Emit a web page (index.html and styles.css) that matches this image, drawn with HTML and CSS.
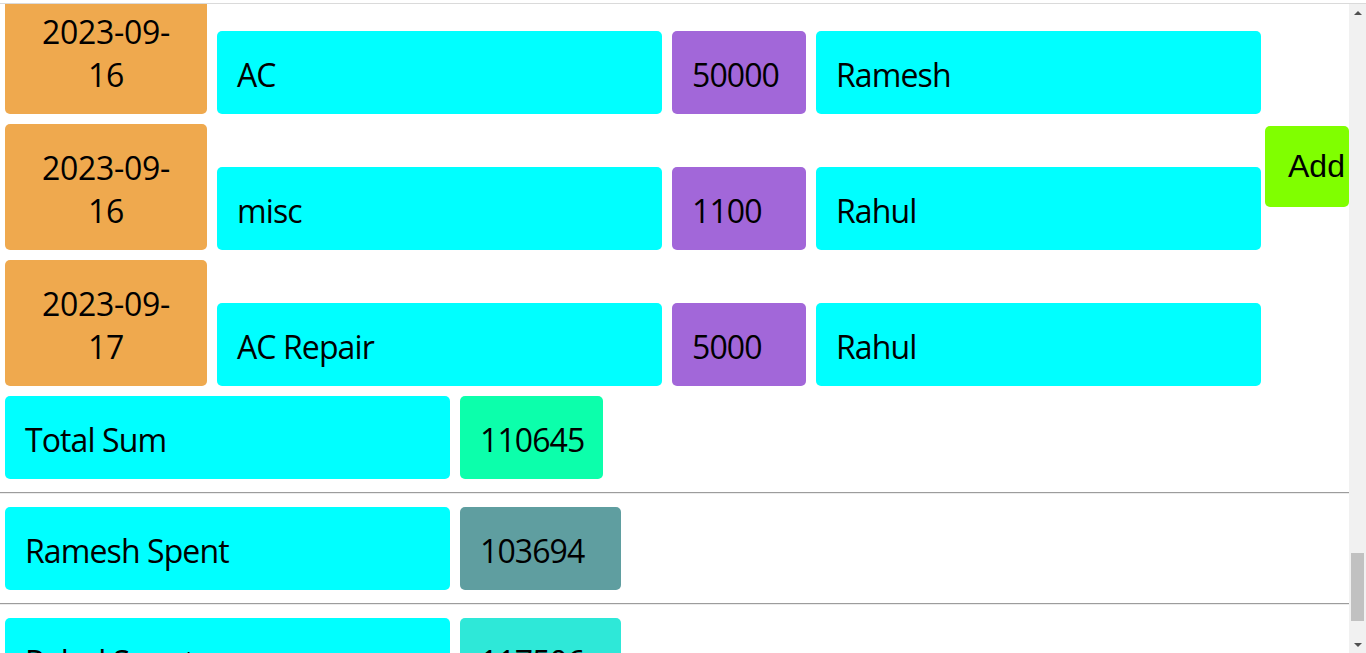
FILE: index.html
```html
<!DOCTYPE html>
<html lang="en">
<head>
<meta charset="utf-8">
<title>Expenses</title>
<link rel="stylesheet" href="styles.css">
</head>
<body>
<div class="frame-top"></div>
<div class="window">
  <main class="viewport">
    <div class="scrolled">
      <section class="entries-block">
        <div class="entries">
          <div class="entry">
            <div class="cell date">2023-09-16</div>
            <div class="cell desc">AC</div>
            <div class="cell amount">50000</div>
            <div class="cell name">Ramesh</div>
          </div>
          <div class="entry">
            <div class="cell date">2023-09-16</div>
            <div class="cell desc">misc</div>
            <div class="cell amount">1100</div>
            <div class="cell name">Rahul</div>
          </div>
          <div class="entry">
            <div class="cell date">2023-09-17</div>
            <div class="cell desc">AC Repair</div>
            <div class="cell amount">5000</div>
            <div class="cell name">Rahul</div>
          </div>
        </div>
        <button class="add" type="button">Add</button>
      </section>
      <div class="sum-row first">
        <div class="cell label">Total Sum</div>
        <div class="cell value total">110645</div>
      </div>
      <hr class="divider">
      <div class="sum-row">
        <div class="cell label">Ramesh Spent</div>
        <div class="cell value ramesh">103694</div>
      </div>
      <hr class="divider">
      <div class="sum-row">
        <div class="cell label">Rahul Spent</div>
        <div class="cell value rahul">117506</div>
      </div>
    </div>
  </main>
  <div class="scrollbar">
    <div class="sb-btn"><span class="arrow-up"></span></div>
    <div class="sb-track"><div class="sb-thumb"></div></div>
    <div class="sb-btn"><span class="arrow-down"></span></div>
  </div>
</div>
</body>
</html>
```
FILE: styles.css
```css
html, body {
  margin: 0;
  padding: 0;
  height: 100%;
  overflow: hidden;
  background: #ffffff;
}

body {
  font-family: "Segoe UI", "Open Sans", "Noto Sans", sans-serif;
  font-size: 32px;
  line-height: 43px;
  color: #000000;
  display: flex;
  flex-direction: column;
}

.frame-top {
  height: 3px;
  border-bottom: 1px solid #dadada;
  background: #ffffff;
  flex: none;
}

.window {
  flex: 1;
  display: flex;
  min-height: 0;
}

.viewport {
  flex: 1;
  overflow: hidden;
}

.scrolled {
  margin-top: -16px;
}

.entries-block {
  display: flex;
  align-items: flex-start;
  gap: 4px;
}

.entries {
  display: flex;
  flex-direction: column;
  gap: 10px;
  padding-left: 5px;
}

.entry {
  display: flex;
  align-items: flex-end;
  gap: 10px;
}

.cell {
  box-sizing: border-box;
  padding: 22px 20px 18px 20px;
  border-radius: 5px;
  letter-spacing: -0.9px;
}

.date {
  width: 202px;
  background: #efa94e;
  text-align: center;
  letter-spacing: -0.3px;
}

.desc, .name, .label {
  width: 445px;
  background: #00ffff;
}

.amount {
  width: 134px;
  background: #a267d9;
}

.add {
  margin-top: 138px;
  width: 84px;
  height: 81px;
  padding: 0 0 0 23px;
  border: none;
  border-radius: 5px;
  background: #80ff00;
  color: #000000;
  font-family: "Liberation Sans", Arial, sans-serif;
  font-size: 32px;
  text-align: left;
  overflow: hidden;
  white-space: nowrap;
}

.sum-row {
  display: flex;
  gap: 10px;
  padding-left: 5px;
}

.sum-row.first {
  margin-top: 10px;
}

.value.total {
  width: 143px;
  background: #0cffab;
}

.value.ramesh {
  width: 161px;
  background: #5f9ea0;
}

.value.rahul {
  width: 161px;
  background: #2ee8d8;
}

.divider {
  margin: 13px 0;
  height: 0;
  border: none;
  border-top: 1px solid #9c9c9c;
  border-bottom: 1px solid #ececec;
}

.scrollbar {
  width: 17px;
  flex: none;
  background: #f1f1f1;
  display: flex;
  flex-direction: column;
}

.sb-btn {
  height: 17px;
  flex: none;
  display: flex;
  align-items: center;
  justify-content: center;
}

.sb-track {
  flex: 1;
  padding: 0 2px;
}

.sb-thumb {
  margin-top: 532px;
  height: 68px;
  background: #c1c1c1;
}

.arrow-up {
  width: 0;
  height: 0;
  border-left: 4px solid transparent;
  border-right: 4px solid transparent;
  border-bottom: 4px solid #505050;
}

.arrow-down {
  width: 0;
  height: 0;
  border-left: 4px solid transparent;
  border-right: 4px solid transparent;
  border-top: 4px solid #505050;
}
```
